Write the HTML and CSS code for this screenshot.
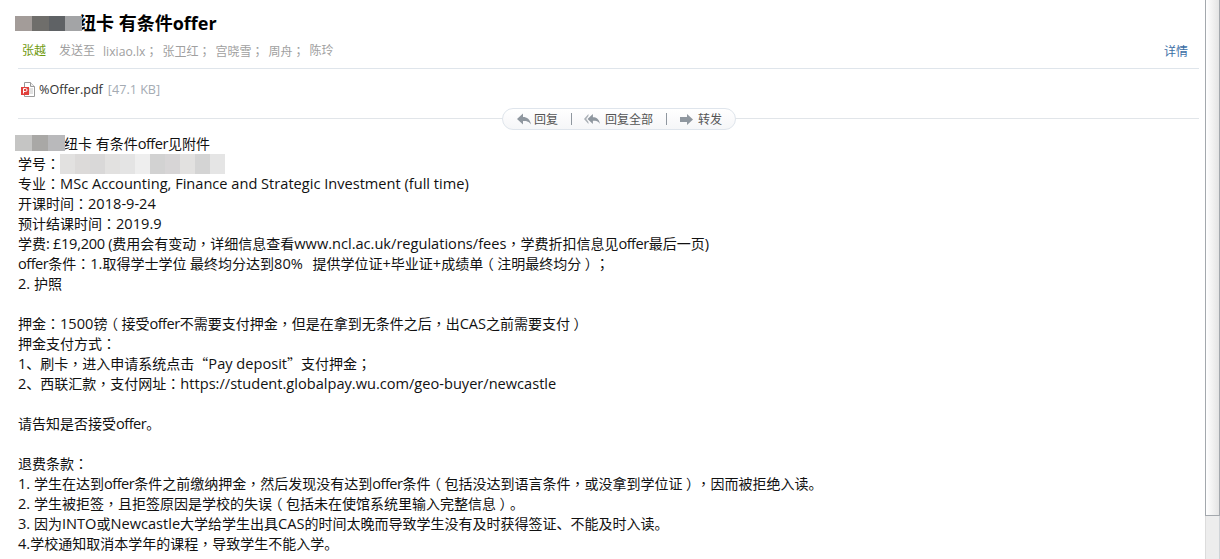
FILE: index.html
```html
<!DOCTYPE html>
<html>
<head>
<meta charset="utf-8">
<title>纽卡 有条件offer</title>
<link rel="stylesheet" href="styles.css">
</head>
<body>
<div class="page">
  <main class="mail">
    <header class="head">
      <h1 class="subject"><span class="mosaic mosaic-title"><i></i><i></i><i></i><i></i></span>纽卡 有条件offer</h1>
      <div class="meta">
        <div class="people">
          <span class="sender">张越</span>
          <span class="sent">发送至</span>
          <span><span class="lx">lixiao.lx</span><span class="pu">；</span></span>
          <span>张卫红<span class="pu">；</span></span>
          <span>宫晓雪<span class="pu">；</span></span>
          <span>周舟<span class="pu">；</span></span>
          <span>陈玲</span>
        </div>
        <a class="detail">详情</a>
      </div>
    </header>
    <div class="attach">
      <svg class="pdf" width="14" height="15" viewBox="0 0 14 15"><path d="M3.5.5h6l4 4v10h-10z" fill="#fff" stroke="#9a9a9a"/><path d="M9.500.5v4h4" fill="#eee" stroke="#9a9a9a"/><path d="M6 7h6M6 9h6M6 11h6" stroke="#c4c4c4"/><rect x="0" y="5" width="8" height="8" fill="#e0403c"/><path d="M2.500 11.500v-5h2a1.300 1.300 0 0 1 0 3h-2" fill="none" stroke="#fff"/></svg>
      <span class="file">%Offer.pdf</span>
      <span class="size">[47.1 KB]</span>
    </div>
    <div class="actions">
      <div class="pill">
        <span class="act">
          <svg width="14" height="12" viewBox="0 0 14 12"><path d="M0 6 6 .5V4c4 0 7 2 8 7.500C12 8.500 10 8 6 8v3.500z" fill="#8f979f"/></svg>回复
        </span>
        <span class="sep"></span>
        <span class="act act-all">
          <svg width="16" height="12" viewBox="0 0 18 12"><path d="M0 6 5 .5v2L2.500 6 5 9.500v2z" fill="#aab0b6"/><path d="M4 6 10 .5V4c4 0 7 2 8 7.500C16 8.500 14 8 10 8v3.500z" fill="#8f979f"/></svg>回复全部
        </span>
        <span class="sep"></span>
        <span class="act act-fwd">
          <svg width="13" height="11" viewBox="0 0 13 11"><path d="M0 3h7V0l6 5.500L7 11V8H0z" fill="#8f979f"/></svg>转发
        </span>
      </div>
    </div>
    <article class="body">
      <p><span class="mosaic mosaic-line"><i></i><i></i><i></i></span>纽卡 有条件<span class="la of">offer</span>见附件</p>
      <p>学号<span class="pu">：</span><span class="mosaic mosaic-id"><i></i><i></i><i></i><i></i><i></i><i></i><i></i><i></i><i></i><i></i><i></i></span></p>
      <p>专业<span class="pu">：</span><span class="la">MSc Accounting, Finance and Strategic Investment (full time)</span></p>
      <p>开课时间<span class="pu">：</span><span class="la">2018-9-24</span></p>
      <p>预计结课时间<span class="pu">：</span><span class="la">2019.9</span></p>
      <p>学费<span class="la tight">: £19,200 (</span>费用会有变动<span class="pu">，</span>详细信息查看<span class="la">www.ncl.ac.uk/regulations/fees</span><span class="pu">，</span>学费折扣信息见<span class="la of">offer</span>最后一页<span class="la">)</span></p>
      <p><span class="la of">offer</span>条件<span class="pu">：</span><span class="la">1.</span>取得学士学位 最终均分达到<span class="la gap">80%&nbsp; </span>提供学位证<span class="la">+</span>毕业证<span class="la">+</span>成绩单<span class="bk">（</span>注明最终均分<span class="bk">）</span><span class="pu">；</span></p>
      <p><span class="la">2. </span>护照</p>
      <p>&nbsp;</p>
      <p>押金<span class="pu">：</span><span class="la">1500</span>镑<span class="bk">（</span>接受<span class="la of">offer</span>不需要支付押金<span class="pu">，</span>但是在拿到无条件之后<span class="pu">，</span>出<span class="la">CAS</span>之前需要支付<span class="bk">）</span></p>
      <p>押金支付方式<span class="pu">：</span></p>
      <p><span class="la">1</span>、刷卡<span class="pu">，</span>进入申请系统点击<span class="cq">“</span><span class="la">Pay deposit</span><span class="cq">”</span>支付押金<span class="pu">；</span></p>
      <p><span class="la">2</span>、西联汇款<span class="pu">，</span>支付网址<span class="pu">：</span><span class="la">https://student.globalpay.wu.com/geo-buyer/newcastle</span></p>
      <p>&nbsp;</p>
      <p>请告知是否接受<span class="la of">offer</span>。</p>
      <p>&nbsp;</p>
      <p>退费条款<span class="pu">：</span></p>
      <p><span class="la">1. </span>学生在达到<span class="la of">offer</span>条件之前缴纳押金<span class="pu">，</span>然后发现没有达到<span class="la of">offer</span>条件<span class="bk">（</span>包括没达到语言条件<span class="pu">，</span>或没拿到学位证<span class="bk">）</span><span class="pu">，</span>因而被拒绝入读。</p>
      <p><span class="la">2. </span>学生被拒签<span class="pu">，</span>且拒签原因是学校的失误<span class="bk">（</span>包括未在使馆系统里输入完整信息<span class="bk">）</span>。</p>
      <p><span class="la">3. </span>因为<span class="la">INTO</span>或<span class="la">Newcastle</span>大学给学生出具<span class="la">CAS</span>的时间太晚而导致学生没有及时获得签证、不能及时入读。</p>
      <p><span class="la">4.</span>学校通知取消本学年的课程<span class="pu">，</span>导致学生不能入学。</p>
    </article>
  </main>
  <aside class="scrollbar"><div class="thumb"></div></aside>
</div>
</body>
</html>
```
FILE: styles.css
```css
* { box-sizing: border-box; }
html, body { margin: 0; height: 559px; overflow: hidden; background: #fff; }
body { font-family: "Open Sans", "Noto Sans CJK SC", sans-serif; color: #111; text-spacing-trim: space-all; }
.page { display: flex; height: 559px; }
.mail { flex: 1; min-width: 0; padding: 0 6px 0 18px; overflow: hidden; }
.head { height: 69px; border-bottom: 1px solid #dfe5eb; padding-top: 11px; }
.subject { margin: 0; font-size: 18px; line-height: 24px; font-weight: 700; color: #000; display: flex; align-items: center; white-space: pre; }
.meta { display: flex; justify-content: space-between; align-items: center; margin-top: 5px; font-size: 12px; line-height: 22px; color: #a0a0a0; padding-left: 4px; }
.people { display: flex; gap: 5px; }
.sender { color: #6f9a0e; margin-right: 8px; }
.sent { margin-right: 3px; }
.lx { font-size: 12.2px; }
.pu { font-family: "Noto Sans CJK TC", sans-serif; }
.cq { font-family: "Noto Sans CJK SC", sans-serif; }
.bk { display: inline-block; width: 14px; text-align: center; font-family: "Noto Sans CJK TC", sans-serif; font-feature-settings: "halt"; }
.la { font-size: 14.6px; }
.of { letter-spacing: -.5px; }
.tight { letter-spacing: -.3px; }
.gap { margin-right: 2px; }
.detail { color: #3b6ea5; margin-right: 11px; }
.attach { height: 40px; display: flex; align-items: center; padding-left: 3px; font-size: 12.6px; }
.pdf { margin-right: 4px; flex: none; }
.file { color: #333; }
.size { color: #a4abb3; margin-left: 5px; }
.actions { height: 20px; display: flex; justify-content: center; position: relative; }
.actions::before { content: ""; position: absolute; left: 0; right: 0; top: 9px; border-top: 1px solid #e1e5e9; }
.pill { position: relative; display: flex; align-items: center; flex: none; width: 234px; height: 22px; margin: -1px 0 0 21px; padding: 0 14px; border: 1px solid #dfe5ec; border-radius: 11px; background: linear-gradient(#fff, #f5f6f8); font-size: 12px; color: #555; }
.act { display: flex; align-items: center; gap: 3px; white-space: nowrap; flex: none; }
.act-all { gap: 5px; }
.act-fwd { gap: 5px; margin-left: 1px; }
.sep { flex: none; width: 1px; height: 12px; background: #8f979f; margin: 0 12px 0 13px; }
.body { margin-top: 4px; font-size: 14px; line-height: 20px; color: #111; }
.body p { margin: 0; white-space: nowrap; height: 20px; }
.mosaic { display: inline-flex; vertical-align: top; }
.mosaic i { display: block; height: 100%; flex: 1; }
.mosaic-title { width: 67px; height: 15px; margin: 0 -4px 0 -3px; filter: blur(.6px); }
.mosaic-title i:nth-child(1) { background: #a39c99; }
.mosaic-title i:nth-child(2) { background: #6f6e6b; }
.mosaic-title i:nth-child(3) { background: #5f6265; }
.mosaic-title i:nth-child(4) { background: #a3a4a6; }
.mosaic-line { width: 50px; height: 16px; margin: 2px -1px 0 -3px; filter: blur(.6px); }
.mosaic-line i:nth-child(1) { background: #c5c5c4; }
.mosaic-line i:nth-child(2) { background: #a9a8a6; }
.mosaic-line i:nth-child(3) { background: #b9b9bb; }
.mosaic-id { width: 165px; height: 20px; margin-top: 1px; filter: blur(.6px); }
.mosaic-id i { background: #e2e1e0; }
.mosaic-id i:nth-child(2) { background: #dcdad9; }
.mosaic-id i:nth-child(3) { background: #d9d8d8; }
.mosaic-id i:nth-child(5) { background: #e4e4e4; }
.mosaic-id i:nth-child(6) { background: #eeeeee; }
.mosaic-id i:nth-child(7) { background: #d2d2d2; }
.mosaic-id i:nth-child(8) { background: #d7d5d6; }
.mosaic-id i:nth-child(10) { background: #d4d4d4; }
.mosaic-id i:nth-child(11) { background: #e5e5e5; }
.scrollbar { flex: none; width: 15px; height: 559px; background: #ededed; border-left: 1px solid #dcdcdc; border-right: 1px solid #cfd3d7; }
.thumb { height: 516px; background: linear-gradient(90deg, #fff, #e4e4e4); border: 1px solid #a3a8ad; border-top: 0; margin: 0 -1px; }
```
